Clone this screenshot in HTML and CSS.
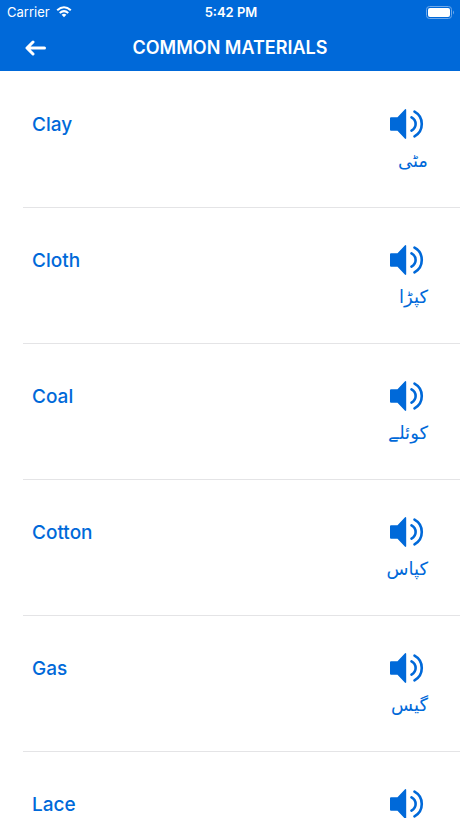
FILE: index.html
```
<!DOCTYPE html>
<html lang="en">
<head>
    <meta charset="UTF-8">
    <meta name="viewport" content="width=device-width, initial-scale=1.0">
    <title>Common Materials</title>
    <link rel="stylesheet" href="styles.css">
</head>
<body>
    <svg class="defs" aria-hidden="true">
        <symbol id="speaker" viewBox="0 0 34 30">
            <path d="M0 9.200Q0 8.200 1 8.200H7.500L14.800 .5Q16.200 -.5 16.200 1V29Q16.200 30.500 14.800 29.500L7.500 21.800H1Q0 21.800 0 20.800Z" fill="currentColor"/>
            <path d="M21.500 8.400C27 11.500 27 18.500 21.500 21.600M24.500 2.700C34.200 8 34.200 22 24.500 27.300" fill="none" stroke="currentColor" stroke-width="2.600" stroke-linecap="round"/>
        </symbol>
    </svg>
    <header class="header">
        <div class="status">
            <div class="carrier">
                <span>Carrier</span>
                <svg class="wifi" viewBox="0 0 16 12">
                    <path d="M1.200 4.300Q8 -1.900 14.800 4.300M3.700 7Q8 3.300 12.300 7" fill="none" stroke="#fff" stroke-width="2"/>
                    <path d="M5.600 8.700Q8 6.800 10.400 8.700L8 11.300Z" fill="#fff"/>
                </svg>
            </div>
            <span class="time">5:42 PM</span>
            <svg class="battery" viewBox="0 0 29 13">
                <rect x=".5" y=".5" width="25" height="12" rx="3" fill="none" stroke="#6fa9ea"/>
                <rect x="2" y="2" width="22" height="9" rx="2" fill="#fff"/>
                <path d="M27 4.500Q29 6.500 27 8.500Z" fill="#6fa9ea"/>
            </svg>
        </div>
        <div class="nav">
            <button class="back" type="button" aria-label="Back">
                <svg viewBox="0 0 22 16"><path d="M8 2L2 8L8 14M2.500 8H19.500" fill="none" stroke="#fff" stroke-width="3" stroke-linecap="round" stroke-linejoin="round"/></svg>
            </button>
            <h1>COMMON MATERIALS</h1>
        </div>
    </header>
    <ul class="list">
        <li>
            <h2>Clay</h2>
            <div class="sound">
                <button type="button" aria-label="Play Clay"><svg><use href="#speaker"/></svg></button>
                <p lang="ur" dir="rtl">مٹی</p>
            </div>
        </li>
        <li>
            <h2>Cloth</h2>
            <div class="sound">
                <button type="button" aria-label="Play Cloth"><svg><use href="#speaker"/></svg></button>
                <p lang="ur" dir="rtl">کپڑا</p>
            </div>
        </li>
        <li>
            <h2>Coal</h2>
            <div class="sound">
                <button type="button" aria-label="Play Coal"><svg><use href="#speaker"/></svg></button>
                <p lang="ur" dir="rtl">کوئلے</p>
            </div>
        </li>
        <li>
            <h2>Cotton</h2>
            <div class="sound">
                <button type="button" aria-label="Play Cotton"><svg><use href="#speaker"/></svg></button>
                <p lang="ur" dir="rtl">کپاس</p>
            </div>
        </li>
        <li>
            <h2>Gas</h2>
            <div class="sound">
                <button type="button" aria-label="Play Gas"><svg><use href="#speaker"/></svg></button>
                <p lang="ur" dir="rtl">گیس</p>
            </div>
        </li>
        <li>
            <h2>Lace</h2>
            <div class="sound">
                <button type="button" aria-label="Play Lace"><svg><use href="#speaker"/></svg></button>
            </div>
        </li>
    </ul>
</body>
</html>
```
FILE: styles.css
```
* {
    margin: 0;
    padding: 0;
    box-sizing: border-box;
}
body {
    height: 100vh;
    display: flex;
    flex-direction: column;
    overflow: hidden;
    background-color: #fff;
    color: #0069d9;
    font-family: Inter, "Liberation Sans", sans-serif;
}
ul, li {
    list-style: none;
}
button {
    border: none;
    background: none;
    color: inherit;
    cursor: pointer;
}
svg {
    display: block;
}
.defs {
    position: absolute;
    width: 0;
    height: 0;
}
.header {
    flex: none;
    background-color: #0069d9;
    color: #fff;
}
.status {
    display: grid;
    grid-template-columns: 1fr auto 1fr;
    align-items: center;
    height: 24px;
    padding: 0 5px 0 7px;
    font-size: 13px;
    line-height: 24px;
}
.carrier {
    display: flex;
    align-items: center;
    gap: 6px;
}
.wifi {
    width: 16px;
    height: 12px;
}
.time {
    font-weight: 600;
}
.battery {
    width: 29px;
    height: 13px;
    justify-self: end;
}
.nav {
    display: grid;
    grid-template-columns: 48px 1fr 48px;
    align-items: center;
    height: 47px;
}
.back {
    padding-left: 25px;
}
.back svg {
    width: 22px;
    height: 16px;
}
.nav h1 {
    font-size: 18px;
    font-weight: 600;
    line-height: 24px;
    text-align: center;
}
.list {
    flex: 1;
    min-height: 0;
    overflow: hidden;
    padding: 1px 0 0 23px;
}
.list li {
    display: flex;
    justify-content: space-between;
    height: 136px;
    padding: 37px 32px 0 9px;
    border-bottom: 1px solid #e4e4e6;
}
.list h2 {
    font-size: 19px;
    font-weight: 500;
    line-height: 32px;
}
.sound {
    display: flex;
    flex-direction: column;
    align-items: flex-end;
}
.sound button {
    margin-right: 4px;
}
.sound svg {
    width: 34px;
    height: 30px;
}
.sound p {
    margin-top: 8px;
    font-family: "DejaVu Sans", sans-serif;
    font-size: 18px;
    line-height: 28px;
}
```
